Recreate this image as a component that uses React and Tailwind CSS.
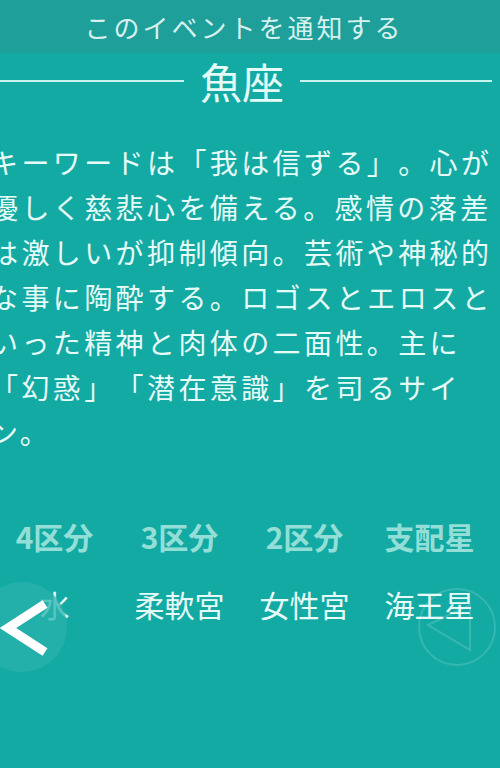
import React from 'react';

const lines = [
  'キーワードは「我は信ずる」。心が',
  '優しく慈悲心を備える。感情の落差',
  'は激しいが抑制傾向。芸術や神秘的',
  'な事に陶酔する。ロゴスとエロスと',
  'いった精神と肉体の二面性。主に',
  '「幻惑」「潜在意識」を司るサイ',
  'ン。',
];

const heads = ['4区分', '3区分', '2区分', '支配星'];
const values = ['水', '柔軟宮', '女性宮', '海王星'];

const App = () => {
  return (
    <div
      className="relative w-[500px] h-[768px] overflow-hidden bg-[#13aaa3]"
      style={{ fontFamily: '"Noto Sans CJK JP", "Noto Sans", sans-serif' }}
    >
      {/* Header bar */}
      <div className="h-[53px] bg-[#1e9f99] flex items-center justify-center">
        <span className="text-[26px] tracking-[3px] text-[#d6f1ee] -ml-[12px] leading-none">
          このイベントを通知する
        </span>
      </div>

      {/* Content (slightly swiped left) */}
      <div className="ml-[-8px] w-[500px]">
        {/* Title */}
        <div className="flex items-center h-[60px] -mt-[2px]">
          <div className="flex-1 h-[2px] bg-[#c9f3ee] mr-[16px]" />
          <span className="text-[42px] leading-none text-[#e4fbf8]">魚座</span>
          <div className="flex-1 h-[2px] bg-[#c9f3ee] ml-[16px]" />
        </div>

        {/* Description */}
        <div className="mt-[29px] ml-[-2px] text-[28px] leading-[45px] tracking-[3.4px] text-[#e6fbf8] [text-spacing-trim:space-all]">
          {lines.map((l, i) => (
            <div key={i} className="whitespace-nowrap">
              {l}
            </div>
          ))}
        </div>

        {/* Table */}
        <div className="grid grid-cols-4 mt-[66px] text-[30px] leading-none">
          {heads.map((h) => (
            <div key={h} className="text-center font-bold text-[#93dfd8]">
              {h}
            </div>
          ))}
        </div>
        <div className="grid grid-cols-4 mt-[38px] text-[30px] leading-none">
          {values.map((v) => (
            <div key={v} className="text-center text-[#e6fbf8]">
              {v}
            </div>
          ))}
        </div>
      </div>

      {/* Prev button */}
      <div className="absolute left-[-23px] top-[582px] w-[90px] h-[90px] rounded-full bg-[#2bb2ac]/75">
        <svg width="90" height="90" viewBox="0 0 90 90">
          <polyline
            points="68,22 31,46 68,70"
            fill="none"
            stroke="#ffffff"
            strokeWidth="9"
            strokeLinejoin="miter"
          />
        </svg>
      </div>

      {/* Next button (faded) */}
      <div className="absolute left-[417px] top-[587px] w-[80px] h-[80px]">
        <svg width="80" height="80" viewBox="0 0 80 80">
          <circle cx="40" cy="40" r="38" fill="none" stroke="#ffffff" strokeOpacity="0.15" strokeWidth="2" />
          <polygon
            points="11,38 53,18 53,63"
            fill="none"
            stroke="#ffffff"
            strokeOpacity="0.16"
            strokeWidth="2"
          />
        </svg>
      </div>
    </div>
  );
};

export default App;
